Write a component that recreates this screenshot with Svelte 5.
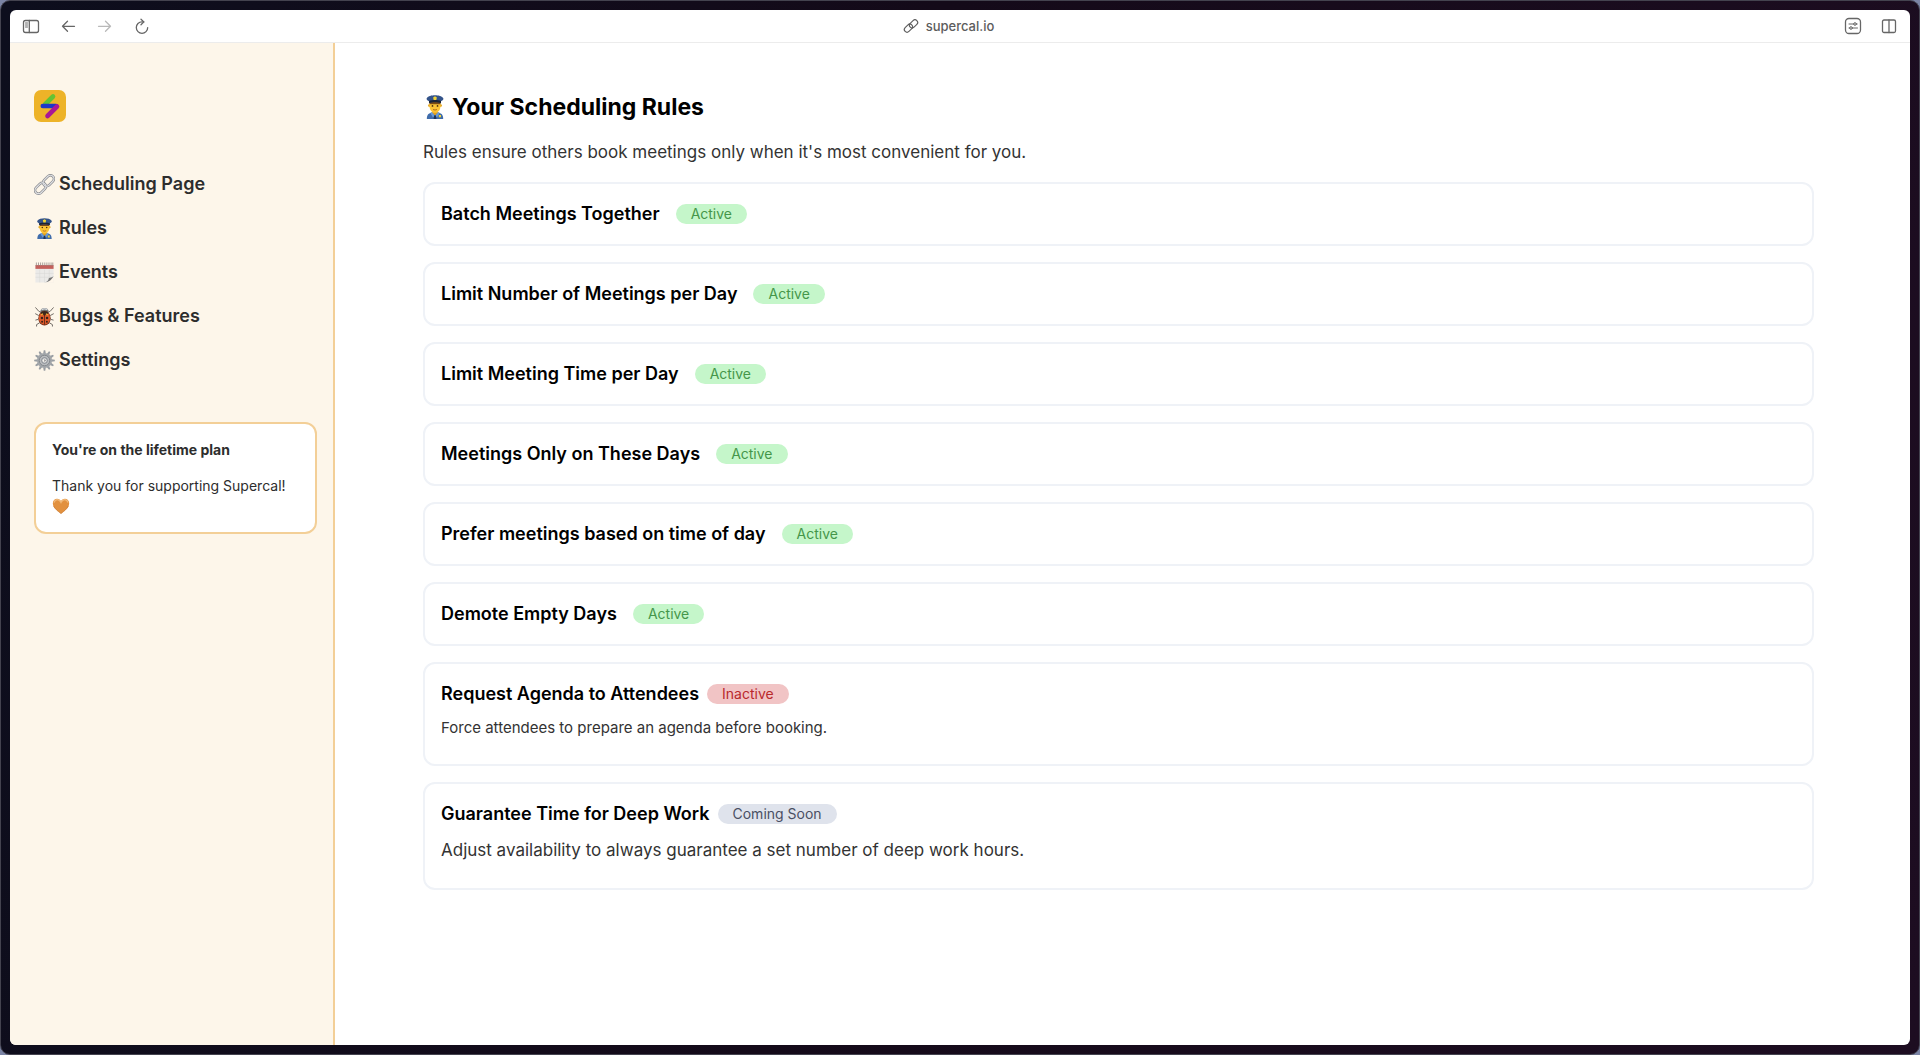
<script>
  const nav = [
    { icon: 'link', label: 'Scheduling Page' },
    { icon: 'officer', label: 'Rules' },
    { icon: 'calendar', label: 'Events' },
    { icon: 'bug', label: 'Bugs & Features' },
    { icon: 'gear', label: 'Settings' }
  ];

  const rules = [
    { title: 'Batch Meetings Together', status: 'Active' },
    { title: 'Limit Number of Meetings per Day', status: 'Active' },
    { title: 'Limit Meeting Time per Day', status: 'Active' },
    { title: 'Meetings Only on These Days', status: 'Active' },
    { title: 'Prefer meetings based on time of day', status: 'Active' },
    { title: 'Demote Empty Days', status: 'Active' },
    {
      title: 'Request Agenda to Attendees',
      status: 'Inactive',
      text: 'Force attendees to prepare an agenda before booking.',
      small: true
    },
    {
      title: 'Guarantee Time for Deep Work',
      status: 'Coming Soon',
      text: 'Adjust availability to always guarantee a set number of deep work hours.'
    }
  ];

  const teeth = Array.from({ length: 12 }, (_, i) => i * 30);
</script>

{#snippet picture(name)}
  <svg class="picture" viewBox="0 0 22 22" aria-hidden="true">
    {#if name === 'link'}
      <g fill="none">
        <g stroke="#85878c" stroke-width="2.700">
          <rect x=".3" y="11.300" width="13" height="7.400" rx="3.700" transform="rotate(-45 6.800 15)" />
          <rect x="8.700" y="3.300" width="13" height="7.400" rx="3.700" transform="rotate(-45 15.200 7)" />
        </g>
        <g stroke="#dfe0e3" stroke-width="1.300">
          <rect x=".3" y="11.300" width="13" height="7.400" rx="3.700" transform="rotate(-45 6.800 15)" />
          <rect x="8.700" y="3.300" width="13" height="7.400" rx="3.700" transform="rotate(-45 15.200 7)" />
        </g>
      </g>
    {:else if name === 'officer'}
      <path d="M3.500 22c0-4 1.500-5.500 5-6h5c3.500.5 5 2 5 6z" fill="#3f6cab" />
      <path d="M8.500 13h5v3.500L11 19l-2.500-2.500z" fill="#e0a01e" />
      <path d="M8 15.500l3 3.500 3-3.500 1.300 1-2.300 4-2-1.500-2 1.500-2.300-4z" fill="#6b9bd6" />
      <path d="M10.300 18.500h1.400l.6 3.500H9.700z" fill="#1d3357" />
      <circle cx="5.800" cy="9.700" r="1.200" fill="#e5a823" />
      <circle cx="16.200" cy="9.700" r="1.200" fill="#e5a823" />
      <path d="M6 5.500h10v5c0 3.500-2.500 5.800-5 5.800s-5-2.300-5-5.800z" fill="#fbc436" />
      <path d="M6 6h10v2.500H6z" fill="#7a4b16" />
      <path d="M3.300 3.200C4.500 1 8 .3 11 .3s6.500.7 7.700 2.900c.2 1.200-1.200 2-2.200 2.600v1.600c-3-1.200-8-1.200-11 0V5.800C4.500 5.200 3.100 4.400 3.300 3.200z" fill="#34548a" />
      <path d="M5.500 5.400c3-1 8-1 11 0v2.200c-3-1.300-8-1.300-11 0z" fill="#1a2437" />
      <path d="M11 1.200l1.700 1.200-.5 2.200h-2.400l-.5-2.200z" fill="#f1d438" />
      <circle cx="8.700" cy="10" r=".8" fill="#4a2c10" />
      <circle cx="13.300" cy="10" r=".8" fill="#4a2c10" />
      <path d="M9.200 13.300q1.800 1 3.600 0" fill="none" stroke="#a95d18" stroke-width=".8" />
      <path d="M14.500 18.300h2v2.200h-2z" fill="#f1d438" />
    {:else if name === 'calendar'}
      <path d="M1.500 3h19v18.500h-19z" fill="#ebeae8" />
      <path d="M1.500 3.200h19v4h-19z" fill="#c4605b" />
      <path d="M2.500 .5v3.500M4.700 .5v3.500M6.900 .5v3.500M9.100 .5v3.500M11.300 .5v3.500M13.500 .5v3.500M15.700 .5v3.500M17.900 .5v3.500M19.700 .5v3.500" stroke="#928884" stroke-width=".8" />
      <path d="M1.500 12h19M1.500 16h16M6 8v13.500M11 8v13.500M16 8v10" stroke="#d8d7d4" stroke-width=".5" />
      <path d="M20.500 15.500v6h-9c4-.5 6-2.500 9-6z" fill="#fff6ea" />
      <path d="M20.500 15c-2 1-3.500 1.500-5 2 0 2-1.500 3.500-4 4.500 4.500-.5 7-3 9-6.500z" fill="#777776" />
    {:else if name === 'bug'}
      <path d="M7 6.500L5 5.500 1.500 1.500M15 6.500l2-1 3.500-4M5 10L1.300 8M17 10l3.700-2M4.500 14l-3 .8M17.500 14l3 .8M6 17.500l-3.300 2v2M16 17.500l3.300 2v2" fill="none" stroke="#6b6661" stroke-width="1" />
      <path d="M6.500 6.500C6.500 3.500 8.500 2 11 2s4.500 1.500 4.500 4.500z" fill="#6f7478" />
      <path d="M8 4q3-2 6 0" stroke="#d9dcdf" stroke-width="1.200" fill="none" />
      <ellipse cx="11" cy="12.800" rx="6.500" ry="7.700" fill="#702c19" />
      <ellipse cx="11" cy="12.500" rx="5.900" ry="7" fill="#dc5a2b" />
      <path d="M6.500 7.300q4.500-4 9 0l-4.500 3z" fill="#33271f" />
      <path d="M11 7v12.500" stroke="#4f2114" stroke-width=".8" />
      <circle cx="8.300" cy="12.500" r="1.300" fill="#352018" />
      <circle cx="13.700" cy="12.500" r="1.300" fill="#352018" />
      <circle cx="8.500" cy="16.500" r="1" fill="#352018" />
      <circle cx="13.500" cy="16.500" r="1" fill="#352018" />
      <path d="M7.500 9.500l2-1.500M14.500 9.500l-2-1.500" stroke="#f4ad35" stroke-width="1.300" />
    {:else if name === 'gear'}
      {#each teeth as angle}
        <path d="M9.600 3.800L10.200.2h1.600l.6 3.600z" fill="#989da2" transform="rotate({angle} 11 11)" />
      {/each}
      <circle cx="11" cy="11" r="7.900" fill="#a2a6aa" />
      <circle cx="11" cy="11" r="5.500" fill="#b9bcbf" stroke="#7d8287" stroke-width=".9" />
      <circle cx="11" cy="11" r="3" fill="#d5d7d9" stroke="#7b8085" stroke-width=".9" />
      <circle cx="11" cy="11" r="1.700" fill="#f5f1ea" />
      <path d="M11 9.500l1.300 1.500-1.300 1.500" fill="#555b62" />
    {:else}
      <path d="M11 20.500C6 16.500 1 12.800 1 7.500 1 4.300 3.300 2 6.200 2 8.300 2 10 3.200 11 5c1-1.800 2.700-3 4.800-3C18.700 2 21 4.300 21 7.500c0 5.300-5 9-10 13z" fill="#e2913f" />
      <path d="M2.500 7C3 4.500 4.500 3.200 6.500 3.200c2 0 3.500 1.500 4.500 3.600 1-2.100 2.500-3.600 4.500-3.600s3.500 1.300 4 3.800" fill="none" stroke="#f1b877" stroke-width="1.500" />
      <path d="M2 11c1.500 3.500 5 6 9 9.300 4-3.300 7.500-5.800 9-9.300" fill="none" stroke="#c77b35" stroke-width=".8" />
    {/if}
  </svg>
{/snippet}

<div class="frame">
  <div class="window">
    <header class="toolbar">
      <div class="tools">
        <button aria-label="Toggle sidebar">
          <svg viewBox="0 0 24 24"><rect x="4.500" y="6.500" width="15" height="12" rx="2" /><path d="M10.300 6.500v12" /><path class="thin" d="M6.500 9h2M6.500 11h2M6.500 13h2" /></svg>
        </button>
        <button aria-label="Back">
          <svg viewBox="0 0 24 24"><path d="M18.500 12.300H6.500M11.500 7.300l-5 5 5 5" /></svg>
        </button>
        <button aria-label="Forward" disabled>
          <svg viewBox="0 0 24 24"><path d="M5.500 12.300h12M12.500 7.300l5 5-5 5" /></svg>
        </button>
        <button aria-label="Reload">
          <svg viewBox="0 0 24 24"><path d="M13.800 7.900H12a5.700 5.700 0 1 0 5.700 5.700" /><path d="M11 5.200l2.800 2.700-2.800 2.900" /></svg>
        </button>
      </div>
      <a class="address" href="#top">
        <svg viewBox="0 0 14 14"><g transform="rotate(-45 7 7)"><rect x="-1" y="4" width="9.400" height="5.400" rx="2.700" /><rect x="5.600" y="4.600" width="9.400" height="5.400" rx="2.700" /></g></svg>
        <span>supercal.io</span>
      </a>
      <div class="tools end">
        <button aria-label="Site settings">
          <svg viewBox="0 0 24 24"><rect x="4.500" y="4.500" width="15" height="15" rx="3.500" /><path class="thin" d="M8 10h5M15.500 10h.7M8 14h1M11.500 14h5" /><circle class="thin" cx="14" cy="10" r="1.300" /><circle class="thin" cx="10" cy="14" r="1.300" /></svg>
        </button>
        <button aria-label="Split view">
          <svg viewBox="0 0 24 24"><rect x="5.500" y="6" width="13" height="12.500" rx="1.500" /><path d="M12 6v12.500" /></svg>
        </button>
      </div>
    </header>

    <div class="body" id="top">
      <aside>
        <svg class="logo" viewBox="0 0 32 32" role="img" aria-label="Supercal">
          <rect width="32" height="32" rx="7" fill="#edb328" />
          <g fill="none" stroke-width="4.600" stroke-linecap="round">
            <path d="M11 14.500L19 6.500" stroke="#64c332" />
            <path d="M8.800 16H22" stroke="#1d37c8" />
            <path d="M23 16.500L13.500 26" stroke="#a91796" />
          </g>
        </svg>
        <nav>
          {#each nav as item}
            <a href="#top">{@render picture(item.icon)}<span>{item.label}</span></a>
          {/each}
        </nav>
        <section class="plan">
          <h2>You're on the lifetime plan</h2>
          <p>Thank you for supporting Supercal!</p>
          <div class="heart">{@render picture('heart')}</div>
        </section>
      </aside>

      <main>
        <h1>{@render picture('officer')}<span>Your Scheduling Rules</span></h1>
        <p class="intro">Rules ensure others book meetings only when it's most convenient for you.</p>
        <div class="rules">
          {#each rules as rule}
            <article>
              <div class="head" class:tight={rule.text}>
                <h3>{rule.title}</h3>
                <span
                  class="pill"
                  class:inactive={rule.status === 'Inactive'}
                  class:soon={rule.status === 'Coming Soon'}>{rule.status}</span>
              </div>
              {#if rule.text}
                <p class:small={rule.small}>{rule.text}</p>
              {/if}
            </article>
          {/each}
        </div>
      </main>
    </div>
  </div>
</div>

<style>
  :global(body) {
    background: #7b84a5;
    font-family: Inter, 'Liberation Sans', sans-serif;
  }
  * {
    box-sizing: border-box;
  }
  h1, h2, h3, p {
    margin: 0;
  }
  a {
    color: inherit;
    text-decoration: none;
  }
  .frame {
    min-height: 100vh;
    display: flex;
    padding: 9px;
    border: 1px solid #44434f;
    border-radius: 10px;
    background: linear-gradient(100deg, #0d0e1d, #140a19 45%, #1d0d21);
  }
  .window {
    flex: 1;
    display: flex;
    flex-direction: column;
    border-radius: 6px;
    overflow: hidden;
    background: #fff;
  }
  .toolbar {
    display: grid;
    grid-template-columns: 1fr auto 1fr;
    align-items: center;
    height: 33px;
    padding: 0 9px;
    border-bottom: 1px solid #ececec;
  }
  .tools {
    display: flex;
    gap: 13px;
  }
  .end {
    justify-content: flex-end;
    gap: 12px;
  }
  button {
    width: 24px;
    height: 24px;
    padding: 0;
    border: 0;
    background: none;
    color: #666;
  }
  button:disabled {
    color: #b9b9b9;
  }
  button svg,
  .address svg {
    display: block;
    fill: none;
    stroke: currentColor;
    stroke-width: 1.3;
    stroke-linecap: round;
    stroke-linejoin: round;
  }
  button svg {
    width: 24px;
    height: 24px;
  }
  button svg .thin {
    stroke-width: 1;
  }
  .address {
    display: flex;
    align-items: center;
    gap: 8px;
    padding-right: 22px;
    font-size: 13px;
    font-weight: 500;
    line-height: 16px;
    color: #5c5c5c;
  }
  .address svg {
    width: 14px;
    height: 14px;
    stroke-width: 1.1;
    overflow: visible;
  }
  .body {
    flex: 1;
    display: flex;
  }
  aside {
    flex: none;
    width: 325px;
    padding: 47px 16px 24px 24px;
    border-right: 2px solid #f3cf97;
    background: #fdf6ea;
    color: #2d2d2d;
  }
  .logo {
    display: block;
    width: 32px;
    height: 32px;
  }
  .picture {
    flex: none;
    display: block;
    width: 21px;
    height: 21px;
  }
  nav {
    display: flex;
    flex-direction: column;
    gap: 20px;
    margin: 50px 0;
  }
  nav a {
    display: flex;
    align-items: center;
    gap: 4px;
    font-size: 18px;
    font-weight: 600;
    line-height: 24px;
  }
  .plan {
    padding: 16px;
    border: 2px solid #f3cf97;
    border-radius: 12px;
    background: #fff;
    font-size: 14px;
    line-height: 20px;
  }
  .plan h2 {
    margin-bottom: 16px;
    font-size: 14px;
    font-weight: 700;
  }
  .heart {
    display: flex;
    align-items: center;
    height: 20px;
  }
  .heart .picture {
    width: 18px;
    height: 18px;
  }
  main {
    flex: 1;
    padding: 48px 96px 48px 88px;
    color: #333;
  }
  h1 {
    display: flex;
    align-items: center;
    gap: 5px;
    font-size: 23px;
    font-weight: 700;
    line-height: 32px;
    color: #000;
  }
  h1 .picture {
    width: 24px;
    height: 24px;
  }
  .intro {
    margin: 17px 0 18px;
    font-size: 17px;
    line-height: 24px;
  }
  .rules {
    display: flex;
    flex-direction: column;
    gap: 16px;
  }
  article {
    padding: 18px 16px;
    border: 2px solid #eff2f7;
    border-radius: 12px;
  }
  .head {
    display: flex;
    align-items: center;
    gap: 16px;
  }
  .tight {
    gap: 8px;
    margin-bottom: 12px;
  }
  h3 {
    font-size: 18px;
    font-weight: 600;
    line-height: 24px;
    color: #000;
  }
  .pill {
    padding: 0 15px;
    border-radius: 10px;
    background: #c5f6ca;
    font-size: 14px;
    line-height: 20px;
    color: #45964a;
  }
  .inactive {
    background: #f1c4c5;
    color: #b9292c;
  }
  .soon {
    background: #dfe3ec;
    color: #4a4f63;
  }
  article p {
    margin-bottom: 8px;
    font-size: 17px;
    line-height: 24px;
  }
  article .small {
    font-size: 15px;
    line-height: 20px;
  }
</style>
